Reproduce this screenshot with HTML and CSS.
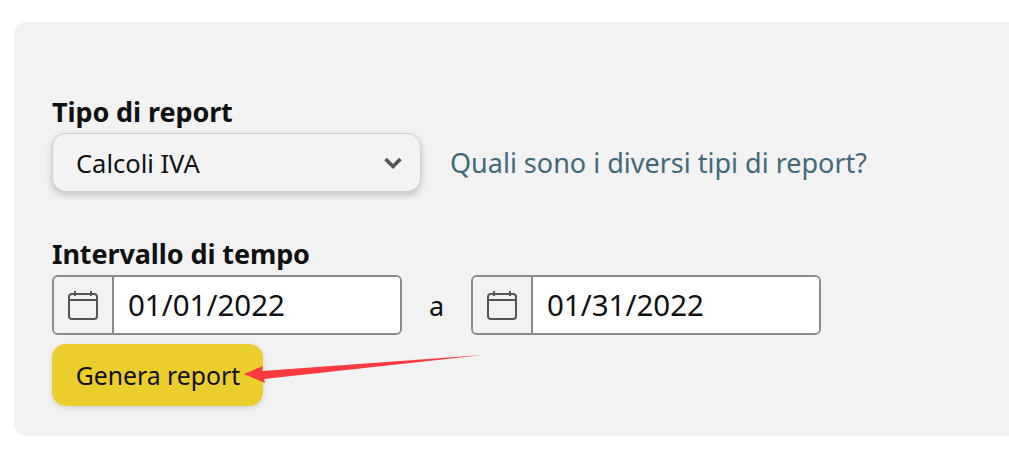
FILE: index.html
```html
<!DOCTYPE html>
<html lang="en">
<head>
    <meta charset="UTF-8">
    <title>Genera report</title>
    <link rel="stylesheet" href="styles.css">
</head>
<body>
    <div class="report-panel">
        <div class="field-label">Tipo di report</div>
        <div class="type-row">
            <div class="select-box">
                <span>Calcoli IVA</span>
                <svg class="chevron" width="20" height="14" viewBox="0 0 20 14">
                    <path d="M2.5 3 L10 10.5 L17.5 3" fill="none" stroke="#555" stroke-width="3.6"/>
                </svg>
            </div>
            <a class="help-link" href="#">Quali sono i diversi tipi di report?</a>
        </div>

        <div class="field-label range-label">Intervallo di tempo</div>
        <div class="date-row">
            <div class="date-input">
                <div class="date-icon">
                    <svg width="32" height="32" viewBox="0 0 32 32">
                        <rect x="2" y="5" width="28" height="25" rx="3" fill="none" stroke="#555" stroke-width="2"/>
                        <path d="M2 11 H30 M8 2 V7 M24 2 V7" fill="none" stroke="#555" stroke-width="2"/>
                    </svg>
                </div>
                <div class="date-value">01/01/2022</div>
            </div>
            <span class="date-sep">a</span>
            <div class="date-input">
                <div class="date-icon">
                    <svg width="32" height="32" viewBox="0 0 32 32">
                        <rect x="2" y="5" width="28" height="25" rx="3" fill="none" stroke="#555" stroke-width="2"/>
                        <path d="M2 11 H30 M8 2 V7 M24 2 V7" fill="none" stroke="#555" stroke-width="2"/>
                    </svg>
                </div>
                <div class="date-value">01/31/2022</div>
            </div>
        </div>

        <button class="generate-btn">Genera report</button>
    </div>

    <!-- red annotation arrow on top of the screenshot -->
    <svg class="annotation" width="260" height="40" viewBox="0 0 260 40">
        <path d="M1 19 L20 11 L19 16 L240 0 L21 24 L22 28 Z" fill="#f93a3f"/>
    </svg>
</body>
</html>
```

FILE: styles.css
```css
body {
    margin: 0;
    height: 461px;
    overflow: hidden;
    background-color: #fff;
    font-family: "Noto Sans", Arial, sans-serif;
    color: #0f1111;
    position: relative;
}
.report-panel {
    box-sizing: border-box;
    height: 414px;
    margin: 22px 0 0 14px;
    padding: 73px 0 0 38px;
    background-color: #f2f2f2;
    border-radius: 12px 0 0 12px;
}
.field-label {
    font-size: 27px;
    font-weight: 700;
    line-height: 34px;
    height: 38px;
    letter-spacing: -0.1px;
}
.range-label {
    margin-top: 45px;
}
.type-row {
    display: flex;
    align-items: center;
    gap: 29px;
}
.select-box {
    box-sizing: border-box;
    width: 369px;
    height: 59px;
    display: flex;
    align-items: center;
    justify-content: space-between;
    padding: 0 17px 0 23px;
    font-size: 25.5px;
    background-color: #f3f3f3;
    border: 1px solid #cfd2d2;
    border-radius: 14px;
    box-shadow: 0 3px 7px rgba(15, 17, 17, 0.22);
}
.help-link {
    font-size: 27px;
    color: #41697a;
    text-decoration: none;
}
.date-row {
    display: flex;
    align-items: center;
}
.date-input {
    box-sizing: border-box;
    width: 350px;
    height: 60px;
    display: flex;
    border: 2px solid #8a8c8c;
    border-radius: 6px;
    overflow: hidden;
}
.date-icon {
    width: 58px;
    display: flex;
    align-items: center;
    justify-content: center;
    border-right: 2px solid #8a8c8c;
    background-color: #f2f2f2;
}
.date-value {
    flex: 1;
    padding-left: 14px;
    font-size: 29.5px;
    line-height: 56px;
    background-color: #fff;
}
.date-sep {
    width: 69px;
    text-align: center;
    font-size: 27px;
}
.generate-btn {
    display: block;
    box-sizing: border-box;
    width: 211px;
    height: 62px;
    margin-top: 9px;
    padding: 0 0 0 1px;
    font-family: inherit;
    font-size: 24.75px;
    color: #0f1111;
    background-color: #ebcd2d;
    border: none;
    border-radius: 14px;
    box-shadow: 0 2px 6px rgba(15, 17, 17, 0.12);
}
.annotation {
    position: absolute;
    left: 243px;
    top: 355px;
}
```
